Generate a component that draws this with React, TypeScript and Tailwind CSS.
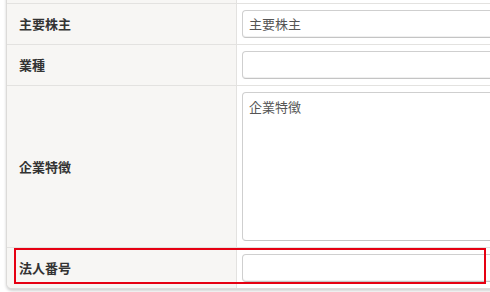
import React from "react";

const font = { fontFamily: '"Noto Sans CJK JP", "Noto Sans", sans-serif' };

function Row({ label, children }: { label: string; children: React.ReactNode }) {
  return (
    <div className="flex border-t border-[#e3e2e0]">
      <div className="w-[230px] shrink-0 bg-[#f7f6f4] border-r border-[#e3e2e0] flex items-center pl-[12px]">
        <span className="text-[13px] font-bold text-[#333]">{label}</span>
      </div>
      <div className="flex-1 bg-white pl-[5px] py-[6px]">{children}</div>
    </div>
  );
}

function Input({ value }: { value?: string }) {
  return (
    <div className="h-[28px] w-[300px] border border-[#cfcfcf] border-b-[#c4c4c4] rounded-[4px] bg-white flex items-center pl-[6px] shadow-[inset_0_-1px_0_rgba(0,0,0,0.06)]">
      <span className="text-[13px] text-[#555]">{value}</span>
    </div>
  );
}

export default function App() {
  return (
    <div className="w-[490px] h-[292px] bg-white overflow-hidden relative" style={font}>
      <div className="ml-[6px] mt-[-38px] w-[560px] border border-[#dcdbd9] rounded-[6px] overflow-hidden bg-white shadow-[0_2px_3px_rgba(0,0,0,0.18)]">
        <div className="flex h-[40px]">
          <div className="w-[230px] shrink-0 bg-[#f7f6f4] border-r border-[#e3e2e0]" />
          <div className="flex-1 bg-white" />
        </div>
        <Row label="主要株主">
          <Input value="主要株主" />
        </Row>
        <Row label="業種">
          <Input />
        </Row>
        <Row label="企業特徴">
          <div className="h-[149px] w-[300px] border border-[#cfcfcf] border-b-[#c4c4c4] rounded-[4px] bg-white pl-[6px] pt-[2px] leading-[20px]">
            <span className="text-[13px] text-[#555]">企業特徴</span>
          </div>
        </Row>
        <Row label="法人番号">
          <Input />
        </Row>
      </div>
      <div className="absolute left-[14px] top-[248px] w-[472px] h-[36px] border-2 border-[#e60012] pointer-events-none" />
    </div>
  );
}
